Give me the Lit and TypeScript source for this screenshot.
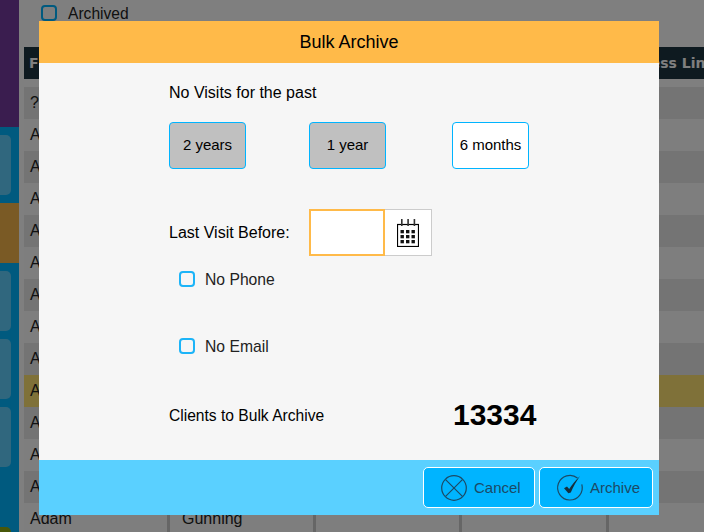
import { LitElement, html, css, svg } from "lit";
import { customElement } from "lit/decorators.js";

const rowLabels = ["?", "A", "A", "A", "A", "A", "A", "A", "A", "A", "A", "A", "A", "Adam"];

@customElement("app-root")
export class AppRoot extends LitElement {
  static styles = css`
    :host {
      display: block;
      position: relative;
      width: 704px;
      height: 532px;
      overflow: hidden;
      background: #fff;
      font-family: "Liberation Sans", Arial, sans-serif;
      font-size: 16px;
      color: #000;
    }
    .page { display: flex; height: 532px; overflow: hidden; }
    .side { width: 19px; flex: none; background: #00b4ff; display: flex; flex-direction: column; }
    .side-top { height: 127px; background: #743a9e; flex: none; }
    .side-item {
      flex: none; height: 60px; width: 11px; margin-top: 8px;
      background: #60cefc; border-radius: 0 5px 5px 0;
    }
    .side-item.gold { width: 19px; background: #f5b54a; border-radius: 0; }
    .side-item.olive { background: #8fae12; margin-top: 60px; }
    .main { flex: 1; min-width: 0; padding-left: 5px; overflow: hidden; }
    .filter { box-sizing: border-box; height: 47px; display: flex; align-items: flex-start; padding: 5px 0 0 17px; gap: 11px; }
    .filter .box { width: 16px; height: 16px; box-sizing: border-box; border: 2px solid #00b4ff; border-radius: 4px; }
    .filter .lbl { line-height: 17px; font-size: 15.6px; color: #222; }
    .head {
      height: 32px; background: #1c3440; color: #fff; display: grid;
      grid-template-columns: 585px 1fr; align-items: center;
      font: bold 14px "DejaVu Sans", sans-serif; margin-bottom: 8px; white-space: nowrap;
    }
    .head span { padding-left: 5px; }
    .head span + span { padding-left: 4px; }
    .row { height: 32px; display: grid; grid-template-columns: 146px 146px 146px 147px 1fr; background: #fcfcfc; }
    .row.dark { background: #e8e8e8; }
    .row.gold { background: #ffe272; }
    .cell { border-right: 3px solid #ccc; padding-left: 6px; line-height: 32px; color: #222; }
    .cell.wide { padding-left: 12px; }
    .cell:last-child { border-right: 0; }

    .overlay { position: absolute; inset: 0; background: rgba(0, 0, 0, 0.5); }
    .modal {
      position: absolute; left: 39px; top: 21px; width: 620px; height: 494px;
      background: #f6f6f6; display: flex; flex-direction: column;
    }
    .title { height: 42px; flex: none; background: #ffba49; display: flex; align-items: center; justify-content: center; font-size: 18px; }
    .body { flex: 1; padding: 21px 0 0 130px; display: flex; flex-direction: column; align-items: flex-start; }
    .line { line-height: 18px; }
    .ranges { display: grid; grid-template-columns: 140px 143px 77px; margin-top: 20px; }
    .range {
      box-sizing: border-box; width: 77px; height: 47px; border: 1px solid #00b4ff; border-radius: 4px;
      background: #fff; display: flex; align-items: center; justify-content: center; font-size: 15px;
      padding-bottom: 2px;
    }
    .range.on { background: #c0c0c0; }
    .date { display: grid; grid-template-columns: 140px 76px 47px; align-items: center; margin-top: 40px; height: 47px; }
    .date-input { box-sizing: border-box; height: 47px; background: #fff; border: 2px solid #ffba49; }
    .date-btn {
      box-sizing: border-box; height: 47px; background: #fff; border: 1px solid #ccc; border-left: 0;
      display: flex; align-items: center; justify-content: center;
    }
    .date-btn svg { display: block; }
    .check { display: flex; align-items: center; gap: 10px; padding-left: 10px; height: 16px; color: #222; }
    .check.first { margin-top: 15px; }
    .check.second { margin-top: 51px; }
    .check i { display: block; width: 16px; height: 16px; box-sizing: border-box; border: 2px solid #1cb4f8; border-radius: 4px; }
    .check span { padding-top: 2px; font-size: 15.7px; }
    .total { display: grid; grid-template-columns: 284px auto; align-items: center; margin-top: 44px; height: 34px; }
    .total div { padding-top: 2px; font-size: 15.6px; }
    .total b { font-size: 30px; line-height: 34px; }
    .foot {
      height: 55px; flex: none; background: #5ad0ff; display: flex; justify-content: flex-end;
      gap: 4px; padding: 7px 6px 0 0; box-sizing: border-box;
    }
    .btn {
      box-sizing: border-box; width: 112px; height: 41px; background: #00b4ff; border: 1px solid #fff;
      border-radius: 5px; display: flex; align-items: center; gap: 7px; padding-left: 17px;
      color: #1c4a66; font-size: 15px;
    }
    .btn.wide { width: 114px; }
    .btn svg { display: block; flex: none; }
  `;

  private calendar() {
    const xs = [3.5, 9, 14.5];
    return html`<svg width="22" height="28" viewBox="0 0 22 28">
      <rect x="0.5" y="5.5" width="21" height="22" fill="#fff" stroke="#000" stroke-width="1.2"></rect>
      ${[4, 10.3, 16.6].map((x) => svg`<rect x=${x} y="0" width="1.6" height="7" fill="#333"></rect>`)}
      ${[11, 16, 21].flatMap((y) => xs.map((x) => svg`<rect x=${x} y=${y} width="3.4" height="3.3" fill="#111"></rect>`))}
    </svg>`;
  }

  private cancelIcon() {
    return html`<svg width="26" height="26" viewBox="0 0 26 26" fill="none" stroke="#1c4a66" stroke-width="1.2">
      <circle cx="13" cy="13" r="12.3"></circle>
      <path d="M4.6 4.6 21.4 21.4M21.4 4.6 4.6 21.4"></path>
    </svg>`;
  }

  private archiveIcon() {
    return html`<svg width="26" height="26" viewBox="0 0 26 26" fill="none" style="overflow:visible">
      <path d="M20.5 3A12.3 12.3 0 1 0 24.8 9.4" stroke="#1c4a66" stroke-width="1.2"></path>
      <path d="M7 13.2 10 11.6 12.2 14C15 9.6 18.6 5.4 23 1 19.4 6.4 16.2 11.6 13.8 17.4L11.4 18.2Z" fill="#16303f"></path>
    </svg>`;
  }

  render() {
    return html`
      <div class="page">
        <div class="side">
          <div class="side-top"></div>
          <div class="side-item"></div>
          <div class="side-item gold"></div>
          <div class="side-item"></div>
          <div class="side-item"></div>
          <div class="side-item"></div>
          <div class="side-item olive"></div>
        </div>
        <div class="main">
          <div class="filter"><div class="box"></div><div class="lbl">Archived</div></div>
          <div class="head"><span>F</span><span>Address Line 1</span></div>
          ${rowLabels.map((label, i) => {
            const cls = i === 9 ? "row gold" : i % 2 === 0 ? "row dark" : "row";
            return html`<div class=${cls}>
              <div class="cell">${label}</div>
              <div class="cell wide">${i === 13 ? "Gunning" : ""}</div>
              <div class="cell"></div>
              <div class="cell"></div>
              <div class="cell"></div>
            </div>`;
          })}
        </div>
      </div>
      <div class="overlay"></div>
      <div class="modal">
        <div class="title">Bulk Archive</div>
        <div class="body">
          <div class="line">No Visits for the past</div>
          <div class="ranges">
            <div class="range on">2 years</div>
            <div class="range on">1 year</div>
            <div class="range">6 months</div>
          </div>
          <div class="date">
            <div>Last Visit Before:</div>
            <div class="date-input"></div>
            <div class="date-btn">${this.calendar()}</div>
          </div>
          <div class="check first"><i></i><span>No Phone</span></div>
          <div class="check second"><i></i><span>No Email</span></div>
          <div class="total"><div>Clients to Bulk Archive</div><b>13334</b></div>
        </div>
        <div class="foot">
          <div class="btn">${this.cancelIcon()}<span>Cancel</span></div>
          <div class="btn wide">${this.archiveIcon()}<span>Archive</span></div>
        </div>
      </div>
    `;
  }
}
